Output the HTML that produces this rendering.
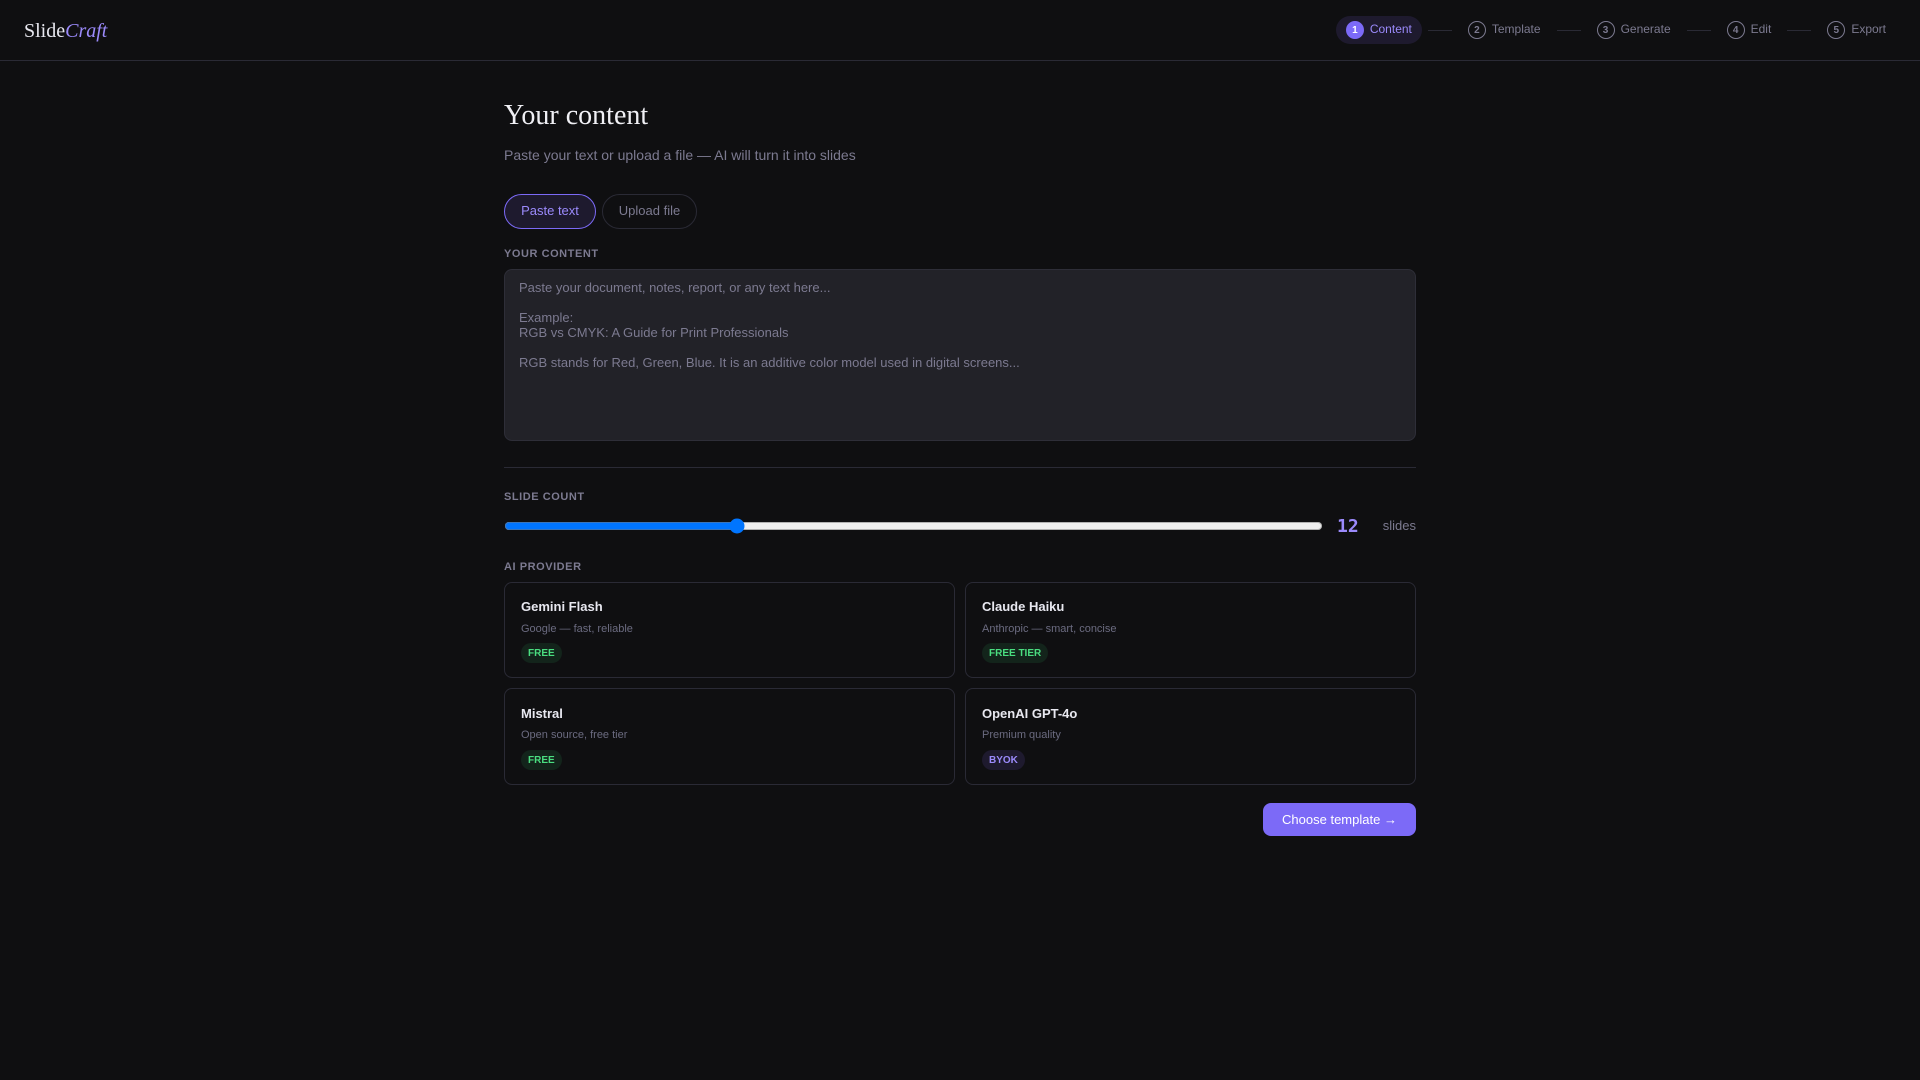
<!DOCTYPE html>
<html lang="en">
<head>
<meta charset="utf-8">
<title>SlideCraft</title>
<style>
*{box-sizing:border-box;margin:0;padding:0}
html,body{width:1920px;height:1080px;overflow:hidden;background:#0f0f11;color:#f0f0f5;font-family:"Liberation Sans",Arial,sans-serif}
nav{position:absolute;left:0;top:0;width:1920px;height:61px;border-bottom:1px solid #2a2a35;display:flex;align-items:center;justify-content:space-between;padding:0 24px}
.logo{font-family:"Liberation Serif",serif;font-size:20px;color:#e8e8f0;position:relative;top:1px}
.logo em{color:#9b8afb;font-style:italic}
.steps{display:flex;align-items:center;gap:6px}
.step{display:flex;align-items:center;gap:6px;padding:5px 10px;height:28px;border-radius:20px;font-size:12px;color:#7c7a90}
.step span:last-child{position:relative;top:-1px}
.step.on{background:#1e1a2e;color:#9b8afb}
.num{width:18px;height:18px;border-radius:50%;border:1px solid #7c7a90;display:flex;align-items:center;justify-content:center;font-size:10px;font-weight:700;color:#7c7a90}
.on .num{background:#7c6af7;border-color:#7c6af7;color:#fff}
.line{width:24px;height:1px;background:#2a2a35}
.a{position:absolute;white-space:nowrap}
h1{font-family:"Liberation Serif",serif;font-size:28px;font-weight:400;color:#f0f0f5;line-height:34px}
.sub{font-size:14px;line-height:16px;color:#7c7a90}
.pill{height:35px;border-radius:20px;border:1px solid #2a2a35;font-size:13px;line-height:31px;text-align:center;color:#7c7a90}
.pill.on{background:#1e1a2e;border-color:#7c6af7;color:#9b8afb}
.label{font-size:11px;line-height:13px;font-weight:700;letter-spacing:.55px;color:#7c7a90}
.ta{left:504px;top:269px;width:912px;height:172px;background:#222228;border:1px solid #2e2e38;border-radius:8px;padding:10px 14px;font-size:13px;line-height:15px;color:#7c7a90;white-space:pre}
.hr{left:504px;top:467px;width:912px;height:1px;background:#2a2a35}
input[type=range]{position:absolute;left:504px;top:518px;width:819px;height:16px;margin:0}
.val{left:1337px;top:517px;font-family:"DejaVu Sans Mono",monospace;font-weight:700;font-size:18px;line-height:20px;color:#9b8afb}
.unit{right:504px;top:518px;font-size:13px;line-height:15px;color:#7c7a90}
.card{position:absolute;width:451px;height:96px;border:1px solid #2a2a35;border-radius:8px;padding:16px}
.card b{display:block;font-size:13px;line-height:15px;color:#e8e8f0;margin-bottom:9px}
.card span{display:block;font-size:11px;line-height:13px;color:#6b6b80}
.card i{display:inline-block;font-style:normal;margin-top:7px;height:20px;line-height:22px;padding:0 7px;border-radius:10px;font-size:10px;font-weight:700}
.r2{height:97px;padding-top:17px}
.r2 b{margin-bottom:8px}
.r2 i{margin-top:8px}
.g{background:#13241b;color:#4ade80}
.p{background:#1e1a2e;color:#9b8afb}
.btn{left:1263px;top:803px;width:153px;height:33px;background:#7c6af7;border-radius:8px;color:#fff;font-size:13px;line-height:33px;text-align:center}
</style>
</head>
<body>
<nav>
  <div class="logo">Slide<em>Craft</em></div>
  <div class="steps">
    <div class="step on"><span class="num">1</span><span>Content</span></div><div class="line"></div>
    <div class="step"><span class="num">2</span><span>Template</span></div><div class="line"></div>
    <div class="step"><span class="num">3</span><span>Generate</span></div><div class="line"></div>
    <div class="step"><span class="num">4</span><span>Edit</span></div><div class="line"></div>
    <div class="step"><span class="num">5</span><span>Export</span></div>
  </div>
</nav>
<h1 class="a" style="left:504px;top:99px">Your content</h1>
<div class="a sub" style="left:504px;top:147px">Paste your text or upload a file — AI will turn it into slides</div>
<div class="a pill on" style="left:504px;top:194px;width:92px">Paste text</div>
<div class="a pill" style="left:602px;top:194px;width:95px">Upload file</div>
<div class="a label" style="left:504px;top:248px">YOUR CONTENT</div>
<div class="a ta">Paste your document, notes, report, or any text here...

Example:
RGB vs CMYK: A Guide for Print Professionals

RGB stands for Red, Green, Blue. It is an additive color model used in digital screens...</div>
<div class="a hr"></div>
<div class="a label" style="left:504px;top:491px">SLIDE COUNT</div>
<input type="range" min="5" max="30" value="12">
<div class="a val">12</div>
<div class="a unit">slides</div>
<div class="a label" style="left:504px;top:561px">AI PROVIDER</div>
<div class="card" style="left:504px;top:582px"><b>Gemini Flash</b><span>Google — fast, reliable</span><i class="g">FREE</i></div>
<div class="card" style="left:965px;top:582px"><b>Claude Haiku</b><span>Anthropic — smart, concise</span><i class="g">FREE TIER</i></div>
<div class="card r2" style="left:504px;top:688px"><b>Mistral</b><span>Open source, free tier</span><i class="g">FREE</i></div>
<div class="card r2" style="left:965px;top:688px"><b>OpenAI GPT-4o</b><span>Premium quality</span><i class="p">BYOK</i></div>
<div class="a btn">Choose template →</div>
</body>
</html>
